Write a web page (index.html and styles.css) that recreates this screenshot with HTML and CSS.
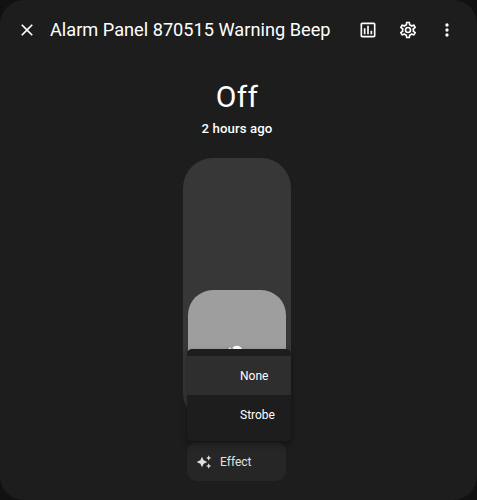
FILE: index.html
```
<!DOCTYPE html>
<html lang="en">
<head>
    <meta charset="UTF-8">
    <meta name="viewport" content="width=device-width, initial-scale=1.0">
    <title>Alarm Panel 870515 Warning Beep</title>
    <link rel="stylesheet" href="styles.css">
</head>
<body>

<div class="dialog">
    <header class="header">
        <button class="icon-btn" aria-label="Close">
            <svg viewBox="0 0 24 24"><path d="M19,6.41L17.59,5L12,10.59L6.41,5L5,6.41L10.59,12L5,17.59L6.41,19L12,13.41L17.59,19L19,17.59L13.41,12L19,6.41Z"/></svg>
        </button>
        <h1 class="title">Alarm Panel 870515 Warning Beep</h1>
        <button class="icon-btn" aria-label="History">
            <svg viewBox="0 0 24 24"><path d="M9 17H7V10H9V17M13 17H11V7H13V17M17 17H15V13H17V17M19 19H5V5H19V19.1M19 3H5C3.9 3 3 3.9 3 5V19C3 20.1 3.9 21 5 21H19C20.1 21 21 20.1 21 19V5C21 3.9 20.1 3 19 3Z"/></svg>
        </button>
        <button class="icon-btn" aria-label="Settings">
            <svg viewBox="0 0 24 24"><path d="M12,8A4,4 0 0,1 16,12A4,4 0 0,1 12,16A4,4 0 0,1 8,12A4,4 0 0,1 12,8M12,10A2,2 0 0,0 10,12A2,2 0 0,0 12,14A2,2 0 0,0 14,12A2,2 0 0,0 12,10M10,22C9.75,22 9.54,21.82 9.5,21.58L9.13,18.93C8.5,18.68 7.96,18.34 7.44,17.94L4.95,18.95C4.73,19.03 4.46,18.95 4.34,18.73L2.34,15.27C2.21,15.05 2.27,14.78 2.46,14.63L4.57,12.97L4.5,12L4.57,11L2.46,9.37C2.27,9.22 2.21,8.95 2.34,8.73L4.34,5.27C4.46,5.05 4.73,4.96 4.95,5.05L7.44,6.05C7.96,5.66 8.5,5.32 9.13,5.07L9.5,2.42C9.54,2.18 9.75,2 10,2H14C14.25,2 14.46,2.18 14.5,2.42L14.87,5.07C15.5,5.32 16.04,5.66 16.56,6.05L19.05,5.05C19.27,4.96 19.54,5.05 19.66,5.27L21.66,8.73C21.79,8.95 21.73,9.22 21.54,9.37L19.43,11L19.5,12L19.43,13L21.54,14.63C21.73,14.78 21.79,15.05 21.66,15.27L19.66,18.73C19.54,18.95 19.27,19.04 19.05,18.95L16.56,17.95C16.04,18.34 15.5,18.68 14.87,18.93L14.5,21.58C14.46,21.82 14.25,22 14,22H10M11.25,4L10.88,6.61C9.68,6.86 8.62,7.5 7.85,8.39L5.44,7.35L4.69,8.65L6.8,10.2C6.4,11.37 6.4,12.64 6.8,13.8L4.68,15.36L5.43,16.66L7.86,15.62C8.63,16.5 9.68,17.14 10.87,17.38L11.24,20H12.76L13.13,17.39C14.32,17.14 15.37,16.5 16.14,15.62L18.57,16.66L19.32,15.36L17.2,13.81C17.6,12.64 17.6,11.37 17.2,10.2L19.31,8.65L18.56,7.35L16.15,8.39C15.38,7.5 14.32,6.86 13.12,6.62L12.75,4H11.25Z"/></svg>
        </button>
        <button class="icon-btn" aria-label="More">
            <svg viewBox="0 0 24 24"><path d="M12,16A2,2 0 0,1 14,18A2,2 0 0,1 12,20A2,2 0 0,1 10,18A2,2 0 0,1 12,16M12,10A2,2 0 0,1 14,12A2,2 0 0,1 12,14A2,2 0 0,1 10,12A2,2 0 0,1 12,10M12,4A2,2 0 0,1 14,6A2,2 0 0,1 12,8A2,2 0 0,1 10,6A2,2 0 0,1 12,4Z"/></svg>
        </button>
    </header>

    <main class="content">
        <div class="state">Off</div>
        <div class="changed">2 hours ago</div>

        <div class="switch">
            <div class="handle">
                <svg viewBox="0 0 24 24"><path d="M12,2C9.76,2 7.78,3.05 6.5,4.68L16.31,14.5C17.94,13.21 19,11.24 19,9A7,7 0 0,0 12,2M3.28,4L2,5.27L5.04,8.3C5,8.53 5,8.76 5,9C5,11.38 6.19,13.47 8,14.74V17A1,1 0 0,0 9,18H14.73L18.73,22L20,20.72L3.28,4M9,20V21A1,1 0 0,0 10,22H14A1,1 0 0,0 15,21V20H9Z"/></svg>
            </div>
        </div>

        <div class="effect">
            <button class="effect-btn">
                <svg viewBox="0 0 24 24"><path d="M9 4L11.5 9.5L17 12L11.5 14.5L9 20L6.5 14.5L1 12L6.5 9.5L9 4M19 2L20.25 4.75L23 6L20.25 7.25L19 10L17.75 7.25L15 6L17.75 4.75L19 2M19 14L20.25 16.75L23 18L20.25 19.25L19 22L17.75 19.25L15 18L17.75 16.75L19 14Z"/></svg>
                <span>Effect</span>
            </button>
            <ul class="menu">
                <li class="selected">None</li>
                <li>Strobe</li>
            </ul>
        </div>
    </main>
</div>

</body>
</html>
```
FILE: styles.css
```
* {
    box-sizing: border-box;
}

body {
    margin: 0;
    background-color: #111;
    color: #fff;
    font-family: Roboto, sans-serif;
}

button {
    padding: 0;
    border: none;
    background: none;
    color: inherit;
    font-family: inherit;
}

svg {
    display: block;
    fill: currentColor;
}

.dialog {
    height: 500px;
    background-color: #1d1d1d;
    border-radius: 24px;
    overflow: hidden;
}

.header {
    display: flex;
    align-items: center;
    height: 59px;
    padding: 0 10px 0 7px;
}

.icon-btn {
    display: flex;
    align-items: center;
    justify-content: center;
    flex: none;
    width: 39.6px;
    height: 40px;
}

.icon-btn svg {
    width: 20px;
    height: 20px;
}

.title {
    flex: 1;
    margin: 0 0 0 3.4px;
    font-size: 18.2px;
    font-weight: 400;
    line-height: 28px;
    white-space: nowrap;
}

.content {
    display: flex;
    flex-direction: column;
    align-items: center;
    padding: 20px 3px 0 0;
}

.state {
    font-size: 30px;
    line-height: 36px;
    letter-spacing: 0.3px;
}

.changed {
    margin-top: 4px;
    font-size: 13.2px;
    font-weight: 500;
    line-height: 20px;
    letter-spacing: 0.1px;
}

.switch {
    display: flex;
    align-items: flex-end;
    width: 108px;
    height: 265px;
    margin-top: 19px;
    padding: 5px;
    background-color: #373737;
    border-radius: 30px;
}

.handle {
    display: flex;
    align-items: center;
    justify-content: center;
    width: 98px;
    height: 128px;
    background-color: #9e9e9e;
    border-radius: 25px;
}

.handle svg {
    width: 20px;
    height: 20px;
}

.effect {
    position: relative;
    width: 100px;
    margin-top: 19px;
}

.effect-btn {
    display: flex;
    align-items: center;
    gap: 8px;
    width: 99px;
    height: 39px;
    padding-left: 9px;
    background-color: #262626;
    border-radius: 10px;
    color: #e1e1e1;
    font-size: 12px;
}

.effect-btn svg {
    width: 16px;
    height: 16px;
}

/* dropdown opens upwards over the switch */
.menu {
    position: absolute;
    left: 0;
    bottom: 40px;
    width: 104px;
    height: 92px;
    margin: 0;
    padding: 7px 0;
    background-color: #1d1d1d;
    border-radius: 5px;
    box-shadow: 0 3px 6px rgba(0, 0, 0, 0.4);
    list-style: none;
}

.menu li {
    height: 39px;
    padding-left: 53px;
    font-size: 12px;
    line-height: 41px;
}

.menu .selected {
    background-color: #2e2e2e;
}
```
